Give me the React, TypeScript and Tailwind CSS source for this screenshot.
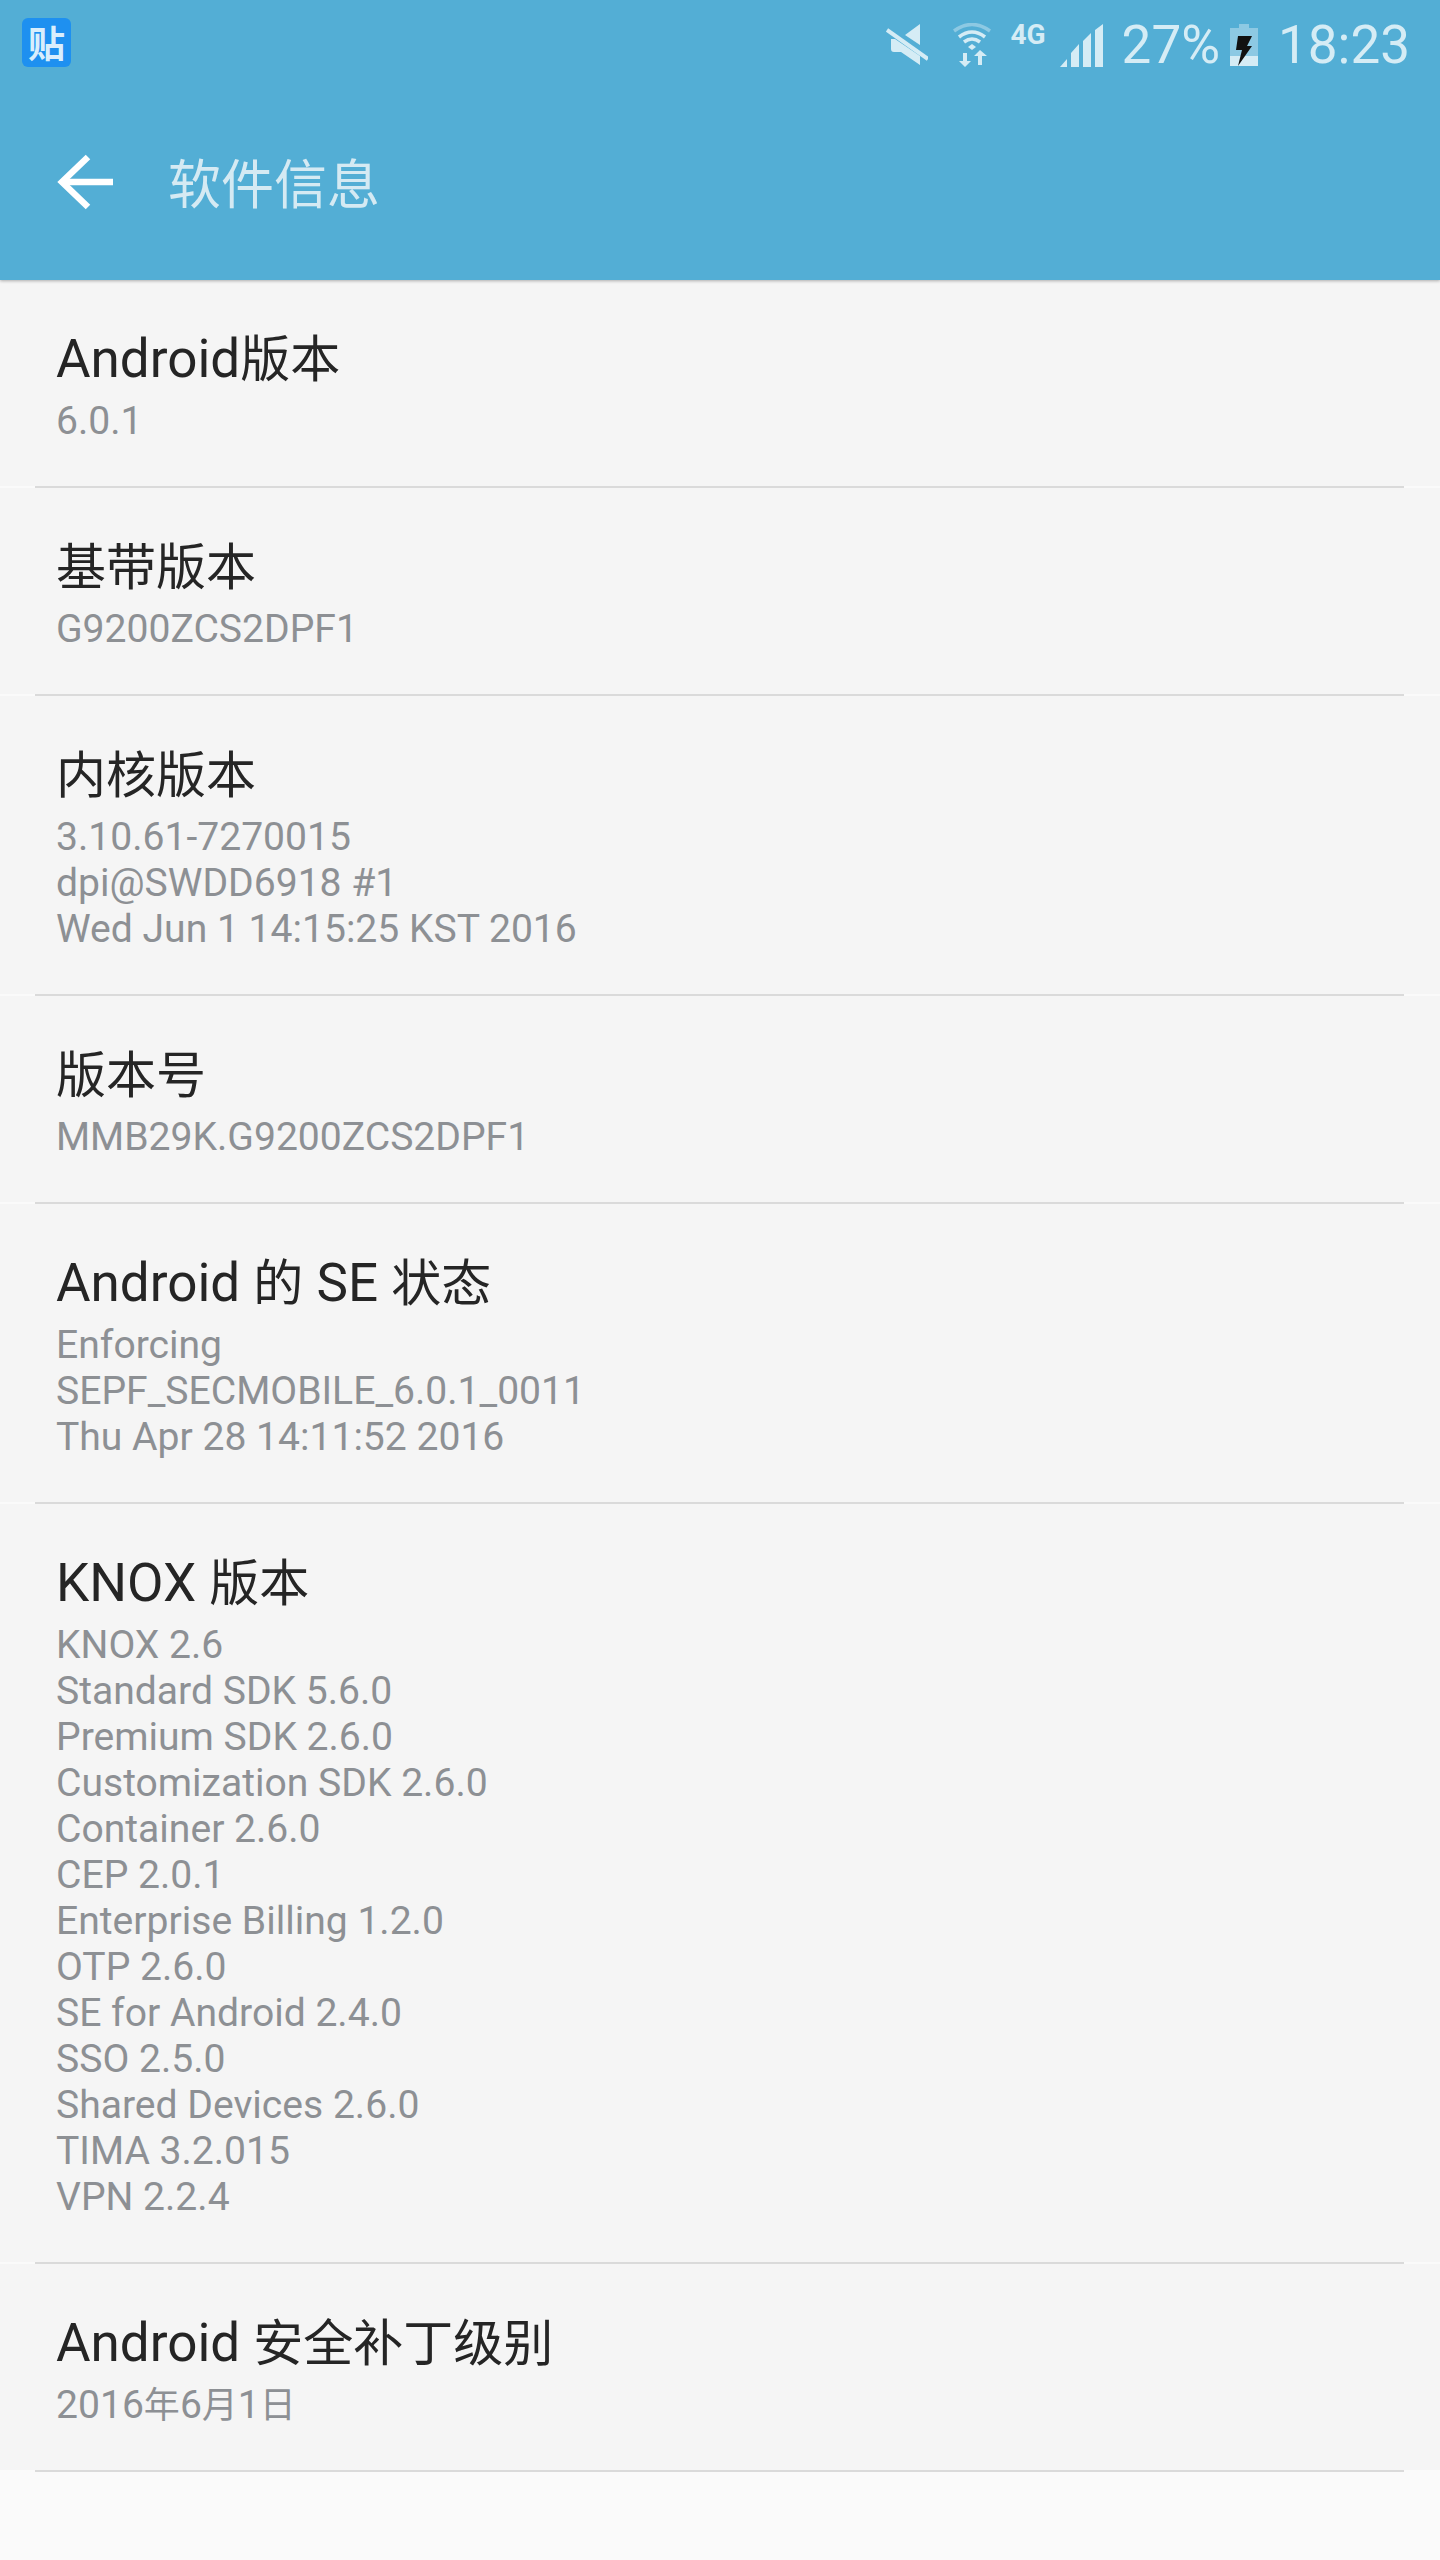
const rows = [
  { title: 'Android版本', lines: ['6.0.1'] },
  { title: '基带版本', lines: ['G9200ZCS2DPF1'] },
  { title: '内核版本', lines: ['3.10.61-7270015', 'dpi@SWDD6918 #1', 'Wed Jun 1 14:15:25 KST 2016'] },
  { title: '版本号', lines: ['MMB29K.G9200ZCS2DPF1'] },
  { title: 'Android 的 SE 状态', lines: ['Enforcing', 'SEPF_SECMOBILE_6.0.1_0011', 'Thu Apr 28 14:11:52 2016'] },
  {
    title: 'KNOX 版本',
    lines: [
      'KNOX 2.6',
      'Standard SDK 5.6.0',
      'Premium SDK 2.6.0',
      'Customization SDK 2.6.0',
      'Container 2.6.0',
      'CEP 2.0.1',
      'Enterprise Billing 1.2.0',
      'OTP 2.6.0',
      'SE for Android 2.4.0',
      'SSO 2.5.0',
      'Shared Devices 2.6.0',
      'TIMA 3.2.015',
      'VPN 2.2.4',
    ],
  },
  { title: 'Android 安全补丁级别', lines: ['2016年6月1日'] },
];

// Chinese runs are set a little smaller than the Roboto around them
function Mixed({ text, cjkClass }: { text: string; cjkClass: string }) {
  return (
    <>
      {text.split(/([\u4e00-\u9fff]+)/).map((part, i) =>
        i % 2 === 1 ? (
          <span key={i} className={cjkClass}>
            {part}
          </span>
        ) : (
          part
        ),
      )}
    </>
  );
}

function StatusIcons() {
  return (
    <div className="flex items-center text-[#d5ecf5]">
      {/* muted speaker */}
      <svg width="42" height="41" viewBox="0 0 42 41" className="mt-[-1px]">
        <path d="M34 0v21L19 11zM5 15h4l25 17v9L15 28H8q-3 0-3-3z" fill="currentColor" />
        <path d="M1 6l41 29" stroke="currentColor" strokeWidth="4" />
      </svg>
      {/* wifi with data arrows */}
      <svg width="38" height="44" viewBox="0 0 38 44" fill="none" className="ml-[25px]">
        <path d="M1 8Q19 -5 37 8" stroke="currentColor" strokeOpacity="0.45" strokeWidth="3.5" />
        <path d="M6 14Q19 4 32 14" stroke="currentColor" strokeWidth="3.5" />
        <path d="M11 19Q19 13 27 19" stroke="currentColor" strokeWidth="3.5" />
        <path d="M15 24l4-3 4 3-4 3z" fill="currentColor" />
        <path d="M10 30h4v8h4l-6 6-6-6h4zM25 42h4v-9h5l-7-6-6 6h4z" fill="currentColor" />
      </svg>
      <span className="ml-[19px] mb-[20px] text-[28px] leading-[24px] font-bold font-['Roboto',sans-serif]">4G</span>
      {/* signal bars */}
      <svg width="43" height="43" viewBox="0 0 43 43" className="ml-[14px]" fill="currentColor">
        <path d="M0 43l7-8v8zM11 43V29l8-9v23zM23 43V17l8-8v34zM35 43V6l8-6v43z" />
      </svg>
      <span className="ml-[19px] text-[53px] leading-[60px] font-['Roboto',sans-serif]">27%</span>
      {/* charging battery */}
      <svg width="28" height="42" viewBox="0 0 28 42" className="ml-[10px]">
        <path d="M9 0h10v4h9v38H0V4h9z" fill="currentColor" fillOpacity="0.45" />
        <path d="M0 32h28v10H0z" fill="currentColor" />
        <path d="M8 12h14l-5 10h5L8 42l4-16H6z" fill="#111" />
      </svg>
      <span className="ml-[20px] text-[53px] leading-[60px] font-['Roboto',sans-serif]">18:23</span>
    </div>
  );
}

export default function App() {
  return (
    <div className="min-h-[2560px] bg-[#fafafa] font-['Roboto','Noto_Sans_CJK_SC',sans-serif]">
      <header className="relative z-10 h-[280px] bg-[#53aed5] shadow-[0_1px_3px_rgba(0,0,0,0.3)]">
        <div className="flex h-[90px] items-center justify-between pl-[22px] pr-[30px]">
          <div className="mt-[-5px] flex h-[49px] w-[49px] items-center justify-center rounded-[6px] bg-[#1e90f0] text-[37px] font-semibold leading-none text-[#d9eefc] font-['Noto_Sans_CJK_SC',sans-serif]">
            贴
          </div>
          <StatusIcons />
        </div>
        <div className="flex h-[184px] items-center pl-[57px]">
          <svg width="56" height="56" viewBox="0 0 56 56" fill="none" stroke="white" strokeWidth="6.5">
            <path d="M56 28H5" />
            <path d="M31 3L5 28l26 25" />
          </svg>
          <h1 className="ml-[55px] text-[53px] font-normal text-[#d5eaf3] font-['Noto_Sans_CJK_SC',sans-serif]">软件信息</h1>
        </div>
      </header>
      <main>
        {rows.map((row) => (
          <section key={row.title}>
            <div className="bg-[#f5f5f5] px-[56px] pt-[42px] pb-[42px]">
              <h2 className="h-[76px] text-[53px] font-normal leading-[75px] text-[#252525]">
                <Mixed text={row.title} cjkClass="text-[50px]" />
              </h2>
              <div className="text-[39.1px] leading-[46px] text-[#8d9094]">
                {row.lines.map((line) => (
                  <p key={line} className="h-[46px]">
                    <Mixed text={line} cjkClass="text-[36px]" />
                  </p>
                ))}
              </div>
            </div>
            <div className="ml-[35px] mr-[36px] h-[2px] bg-[#dadada]" />
          </section>
        ))}
      </main>
    </div>
  );
}
